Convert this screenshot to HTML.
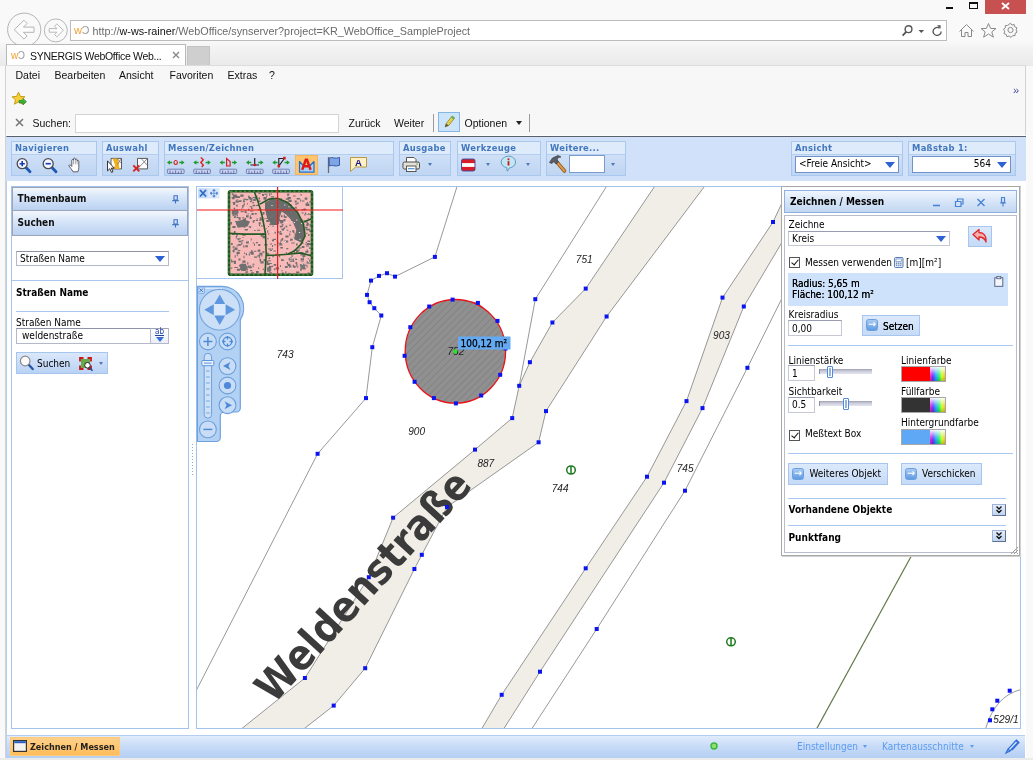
<!DOCTYPE html>
<html><head><meta charset="utf-8"><title>SYNERGIS WebOffice</title>
<style>
*{box-sizing:border-box;margin:0;padding:0}
html,body{width:1033px;height:760px;overflow:hidden;background:#f9f9f9}
body{position:relative;font-family:"DejaVu Sans Condensed","DejaVu Sans","Liberation Sans",sans-serif;font-size:10px;color:#000}
.abs{position:absolute}
.ui{position:absolute;font-family:"Liberation Sans",sans-serif;font-size:10.5px;color:#111;white-space:nowrap;line-height:12px}
.t{position:absolute;white-space:nowrap;line-height:12px}
svg{position:absolute;overflow:visible}
/* chrome */
#urlbar{left:70px;top:20px;width:877px;height:21px;background:#fff;border:1px solid #bcbcbc}
#tabshade{left:0;top:42px;width:1033px;height:24px;background:linear-gradient(#f8f8f8 0,#f2f2f2 30%,#eaeaea 100%)}
#tab{left:6px;top:44px;width:180px;height:22px;background:#fff;border:1px solid #b8b8b8;border-bottom:none}
#newtab{left:187px;top:46px;width:23px;height:19px;background:#cfcfcf;border:1px solid #c4c4c4;border-bottom:none}
#page{left:5px;top:65px;width:1021px;height:695px;background:#f7f7f7;border-left:1px solid #d2d2d2;border-right:1px solid #d2d2d2;border-top:1px solid #dcdcdc}
#findin{left:75px;top:114px;width:264px;height:19px;background:#fff;border:1px solid #d4d4d4}
/* app */
#app{left:6px;top:136px;width:1020px;height:622px;background:#fff;border-top:1px solid #59616b;border-left:1px solid #b7d0f0}
#tb{left:6px;top:137px;width:1020px;height:44px;background:#d0e1f9}
.grp{position:absolute;top:141px;height:35px;border:1px solid #a9c8ee;background:linear-gradient(#deebfb 0,#deebfb 12px,#cfe0f7 13px,#bfd5f2 100%)}
.grp:after{content:"";position:absolute;left:0;right:0;top:12px;height:1px;background:#b3cef0}
.grp b{position:absolute;left:3px;top:0px;font-family:"DejaVu Sans",sans-serif;font-size:8.400px;letter-spacing:.3px;font-weight:bold;color:#4377bd;line-height:12px;white-space:nowrap}
.sel{position:absolute;background:#fff;border:1px solid #7a9ccc;font-size:10px;line-height:14px;white-space:nowrap}
.arr{position:absolute;width:0;height:0;border-left:5px solid transparent;border-right:5px solid transparent;border-top:6px solid #2c62d4}
.sarr{position:absolute;width:0;height:0;border-left:2.5px solid transparent;border-right:2.5px solid transparent;border-top:3px solid #4f78b5}
.panel{position:absolute;background:#fff;border:1px solid #a3c3ec}
.hd{position:absolute;height:25px;background:linear-gradient(#f3f8fe 0,#dbe8f9 35%,#c9dcf5 70%,#b9d1f1 100%);border:1px solid #9ea3b8;font-weight:bold;font-size:10px;color:#111}
.hd span{position:absolute;left:4.500px;top:4px;line-height:13px;white-space:nowrap}
.cb{width:11px;height:11px;background:#fff;border:1px solid #555}
.cb:after{content:"";position:absolute;left:2.500px;top:0;width:3px;height:6px;border:solid #111;border-width:0 1.500px 1.500px 0;transform:rotate(40deg)}
.btn{background:linear-gradient(#dce9fb,#c6dbf7);border:1px solid #a6c5ef}
.ico{width:12px;height:12px;border-radius:2.500px;background:linear-gradient(#a9cbf3,#5f9be3);border:1px solid #6a9fde}
.ico:after{content:"→";position:absolute;left:1px;top:-2.500px;font-size:9.500px;line-height:12px;color:#fff;font-family:"DejaVu Sans",sans-serif;font-weight:bold}
.trk{width:53px;height:5px;background:linear-gradient(#9d9db5,#c9cad8 40%,#e4e5ee);border-left:1px solid #8e8fa8}
.thm{width:6px;height:12px;background:#e6f0fc;border:1px solid #4f8bd6;border-radius:1px;box-shadow:inset 0 0 0 1px #fff,inset 0 0 0 2px #8db6e8}
.sw{width:45px;height:16px;border:1px solid #a8a8a8}
.rb{width:15px;height:14px;background:linear-gradient(rgba(255,255,255,.95),rgba(255,255,255,.2) 50%,rgba(255,255,255,0) 70%,rgba(0,0,0,.2)),linear-gradient(90deg,#f2c,#63f,#2af,#2e7,#cf2,#fb2)}
.tgl{width:14px;height:12px;background:linear-gradient(#e4edfa,#c0d4f0);border:1px solid #9db4d8;border-right-color:#5f6f90;border-bottom-color:#5f6f90}
#root{position:absolute;left:0;top:0;width:1033px;height:760px;will-change:transform;overflow:hidden}
</style></head><body><div id="root">
<!-- ===== browser chrome ===== -->
<div id="tabshade" class="abs"></div>
<!-- window buttons -->
<div class="abs" style="left:985px;top:0;width:41px;height:14px;background:#c75050"></div>
<svg style="left:985px;top:0" width="41" height="14"><path d="M17 3l7 6M24 3l-7 6" stroke="#fff" stroke-width="1.8" fill="none"/></svg>
<div class="abs" style="left:969px;top:2px;width:9px;height:7px;border:1px solid #111;border-top-width:2px"></div>
<div class="abs" style="left:946px;top:7px;width:7px;height:2px;background:#111"></div>
<!-- back / forward -->
<svg style="left:0;top:0" width="80" height="50">
 <circle cx="24.200" cy="29.700" r="16.600" fill="#f9f9f9" stroke="#b2b2b2" stroke-width="1"/>
 <path d="M14.200 29.700L24 20.300l3.100 3.100-3.700 3.700H34v5.200H23.400l3.700 3.700L24 39.100z" fill="#fdfdfd" stroke="#b4b4b4" stroke-width="1" stroke-linejoin="round"/>
 <circle cx="55.800" cy="30.400" r="11.500" fill="#f9f9f9" stroke="#b6b6b6" stroke-width="1"/>
 <path d="M63.400 30.300L56.800 24l-2.200 2.200 2.400 2.400H49.200v3.600H57l-2.400 2.400 2.200 2.200z" fill="#fdfdfd" stroke="#b8b8b8" stroke-width="1" stroke-linejoin="round"/>
</svg>
<div id="urlbar" class="abs"></div>
<div class="ui" style="left:74px;top:24px;font-size:11px;color:#f0a030;letter-spacing:-0.5px">w<span style="color:#9a9a9a">Ɔ</span></div>
<div class="ui" id="urltxt" style="left:92.5px;top:25px;font-size:10.8px;color:#6a6a6a">http://<span style="color:#111">w-ws-rainer</span>/WebOffice/synserver?project=KR_WebOffice_SampleProject</div>
<!-- url bar icons -->
<svg style="left:900px;top:22px" width="50" height="18">
 <circle cx="8.5" cy="7.2" r="3.4" fill="none" stroke="#555" stroke-width="1.4"/><path d="M6.2 9.8L2.6 13.6" stroke="#555" stroke-width="1.8"/>
 <path d="M18.5 8l2.8 3 2.8-3z" fill="#555"/>
 <path d="M39.5 6.2a4 4 0 1 0 1.6 3.2" fill="none" stroke="#555" stroke-width="1.3"/><path d="M37 3.2h3.6v3.6z" fill="#555"/>
</svg>
<svg style="left:955px;top:20px" width="70" height="22" fill="none" stroke="#8a8a8a" stroke-width="1">
 <path d="M4.5 11.5l7-7 7 7M6.5 10v6.5h3.5v-4h3v4h3.5v-6.500"/>
 <path d="M33.500 3.500l2.200 5h5.300l-4.200 3.400 1.600 5.300-4.900-3.200-4.900 3.200 1.600-5.300-4.200-3.400h5.300z"/>
 <circle cx="55.500" cy="10" r="2.600"/><path d="M55.500 3.200l1.400 1.900 2.300-.6.500 2.300 2.200.9-.8 2.300 1 2.100-2 1.200-.1 2.400-2.400-.1-1.500 1.800-1.900-1.400-2.300.7-.7-2.300-2.200-.8.700-2.300-1.200-2 1.900-1.400-.1-2.400 2.400-.1z"/>
</svg>
<div id="tab" class="abs"></div>
<div id="newtab" class="abs"></div>
<div class="ui" style="left:11px;top:50px;font-size:10px;color:#f0a030;letter-spacing:-0.5px">w<span style="color:#9a9a9a">Ɔ</span></div>
<div class="ui" id="tabtxt" style="left:30px;top:50px;font-size:10.5px;letter-spacing:-0.3px">SYNERGIS WebOffice Web...</div>
<svg style="left:172px;top:51px" width="8" height="8"><path d="M1 1l6 6M7 1l-6 6" stroke="#8a8a8a" stroke-width="1.4"/></svg>
<div id="page" class="abs"></div>
<!-- menu -->
<div class="ui" style="left:15.500px;top:69px">Datei</div>
<div class="ui" style="left:54.500px;top:69px">Bearbeiten</div>
<div class="ui" style="left:119px;top:69px">Ansicht</div>
<div class="ui" style="left:169.500px;top:69px">Favoriten</div>
<div class="ui" style="left:227.500px;top:69px">Extras</div>
<div class="ui" style="left:269px;top:69px">?</div>
<!-- favourites star -->
<svg style="left:11px;top:91px" width="17" height="16">
 <path d="M7.500 1.200l1.900 4.200 4.500.4-3.400 3 1 4.400-4-2.400-4 2.400 1-4.400-3.400-3 4.500-.4z" fill="#f7d038" stroke="#c79a10" stroke-width="1" stroke-linejoin="round"/>
 <path d="M8 9.500h4v-2l3.500 3.200-3.500 3.200v-2h-4z" fill="#3bb33b" stroke="#1c7c1c" stroke-width=".6"/>
</svg>
<div class="ui" style="left:1013px;top:84px;color:#4a4a9a;font-size:11px">»</div>
<!-- find bar -->
<svg style="left:15px;top:118px" width="9" height="9"><path d="M1 1l7 7M8 1l-7 7" stroke="#777" stroke-width="1.500"/></svg>
<div class="ui" style="left:32.500px;top:117px">Suchen:</div>
<div id="findin" class="abs"></div>
<div class="ui" style="left:348.500px;top:117px">Zurück</div>
<div class="ui" style="left:394px;top:117px">Weiter</div>
<div class="abs" style="left:433px;top:114px;width:1px;height:18px;background:#9a9a9a"></div>
<div class="abs" style="left:438px;top:112px;width:22px;height:20px;background:#cce4f9;border:1px solid #84b6e6"></div>
<svg style="left:441px;top:114px" width="16" height="16"><path d="M4 13l1.200-3.500 6-7.500 2.500 2-6 7.500z" fill="#e6d24a" stroke="#8f8426" stroke-width=".8"/><path d="M4 13l1.200-3.500 2.500 2z" fill="#555"/><path d="M10 3.500l1.200-1.500 2.500 2-1.200 1.500z" fill="#5fae5f"/></svg>
<div class="ui" style="left:464.500px;top:117px">Optionen</div>
<div class="abs" style="left:516px;top:121px;width:0;height:0;border-left:3.500px solid transparent;border-right:3.500px solid transparent;border-top:4px solid #222"></div>
<div class="abs" style="left:529px;top:114px;width:1px;height:18px;background:#9a9a9a"></div>
<!-- ===== application ===== -->
<div class="abs" style="left:6px;top:135px;width:1020px;height:1px;background:#fdfdfd"></div>
<div id="app" class="abs"></div>
<div id="tb" class="abs"></div>
<div class="grp" style="left:11px;width:86px"><b>Navigieren</b></div>
<div class="grp" style="left:102px;width:57px"><b>Auswahl</b></div>
<div class="grp" style="left:164px;width:230px"><b>Messen/Zeichnen</b></div>
<div class="grp" style="left:399px;width:52px"><b>Ausgabe</b></div>
<div class="grp" style="left:457px;width:84px"><b>Werkzeuge</b></div>
<div class="grp" style="left:546px;width:80px"><b>Weitere...</b></div>
<div class="grp" style="left:791px;width:112px"><b>Ansicht</b></div>
<div class="grp" style="left:908px;width:108px"><b>Maßstab 1:</b></div>
<div class="sel" style="left:795px;top:156px;width:104px;height:17px;padding-left:3px;border:1.500px solid #6f93c9">&lt;Freie Ansicht&gt;</div>
<div class="arr" style="left:885px;top:162px"></div>
<div class="sel" style="left:912px;top:156px;width:99px;height:17px;text-align:right;padding-right:19px;border:1.500px solid #6f93c9">564</div>
<div class="arr" style="left:997px;top:162px"></div>
<div class="abs" style="left:295px;top:155px;width:23px;height:20px;background:#ffc56e;border:1px solid #f5b45c"></div>
<div class="abs" style="left:569px;top:155px;width:36px;height:18px;background:#fff;border:1px solid #7a9ccc"></div>
<div class="sarr" style="left:428px;top:163px"></div>
<div class="sarr" style="left:486px;top:163px"></div>
<div class="sarr" style="left:526px;top:163px"></div>
<div class="sarr" style="left:611px;top:163px"></div>

<svg style="left:0;top:0" width="640" height="182">
<g transform="translate(16,157.500)"><path d="M10 10l4 4.200" stroke="#1d58b4" stroke-width="2.800" stroke-linecap="round"/><circle cx="6.200" cy="6.200" r="5" fill="#f3f7ff" stroke="#4a4a52" stroke-width="1.300"/><path d="M3.600 6.200h5.200M6.200 3.600v5.200" stroke="#1838b8" stroke-width="1.600"/></g>
<g transform="translate(42,157.500)"><path d="M10 10l4 4.200" stroke="#1d58b4" stroke-width="2.800" stroke-linecap="round"/><circle cx="6.200" cy="6.200" r="5" fill="#f3f7ff" stroke="#4a4a52" stroke-width="1.300"/><path d="M3.600 6.200h5.200" stroke="#1838b8" stroke-width="1.600"/></g>
<g transform="translate(68,157.300)"><path d="M5 14.500C4 12 1.500 10 .8 8.200c.9-.9 2.200-.2 3 1V3c0-1.100 1.700-1.100 1.700 0V1.600c0-1.100 1.800-1.100 1.800 0v1c0-1.100 1.800-1.100 1.800 0V4c0-1.100 1.700-1.100 1.700 0v6.500c0 1.500-.5 2.500-.9 4z" fill="#fff" stroke="#50505a" stroke-width=".9" stroke-linejoin="round"/><path d="M5.500 3v4M7.300 2.600v4.400M9.100 4v3" stroke="#777" stroke-width=".6"/></g>
<g transform="translate(106,156.400)"><path d="M5 2h10.500v10.500H5z" fill="#fff" stroke="#5a5a5a" stroke-width="1"/><path d="M6.500 2h5.500l1.500 10.500h-5.500l1-4z" fill="#f2b01c"/><path d="M11 2l4.500 5M15.500 2l-4 6" stroke="#5a5a5a" stroke-width=".7" fill="none"/><path d="M1.500 4.500v10l2.300-2.200 1.700 3.700 1.500-.7-1.700-3.600h3z" fill="#fff" stroke="#222" stroke-width=".9" stroke-linejoin="round"/></g>
<g transform="translate(132,156.400)"><path d="M5.500 2h10v10.500h-10z" fill="#fff" stroke="#5a5a5a" stroke-width="1"/><path d="M5.500 12.500L15.500 2M9 2l6.500 7" stroke="#5a5a5a" stroke-width=".7"/><path d="M1.300 9l6 6M7.300 9l-6 6" stroke="#d42424" stroke-width="1.900"/></g>
<g transform="translate(167,155)"><path d="M0 7.500l3-2.200v1.400h2.200v1.600H3v1.400zM17.500 7.500l-3-2.200v1.400h-2.200v1.600h2.200v1.400z" fill="#1f9a2c"/><ellipse cx="8.700" cy="7.500" rx="1.700" ry="2" fill="none" stroke="#d61c1c" stroke-width="1.100"/><rect x=".4" y="14.200" width="16.700" height="4.300" rx=".8" fill="#c9d2ee" stroke="#5d6ea8" stroke-width=".8"/><path d="M3 15.500v3M5.800 16.500v2M8.600 15.500v3M11.400 16.500v2M14.200 15.500v3" stroke="#3c4a88" stroke-width=".7"/></g>
<g transform="translate(193.3,155)"><path d="M0 7.500l3-2.200v1.400h2.200v1.600H3v1.400zM17.500 7.500l-3-2.200v1.400h-2.200v1.600h2.200v1.400z" fill="#1f9a2c"/><path d="M7.500 2.500l2.500 2.300-2.500 2.700 2.500 2.500-1.500 2" fill="none" stroke="#d61c1c" stroke-width="1.300"/><rect x=".4" y="14.200" width="16.700" height="4.300" rx=".8" fill="#c9d2ee" stroke="#5d6ea8" stroke-width=".8"/><path d="M3 15.500v3M5.800 16.500v2M8.600 15.500v3M11.400 16.500v2M14.200 15.500v3" stroke="#3c4a88" stroke-width=".7"/></g>
<g transform="translate(219.6,155)"><path d="M0 7.500l3-2.200v1.400h2.200v1.600H3v1.400zM17.500 7.500l-3-2.200v1.400h-2.200v1.600h2.200v1.400z" fill="#1f9a2c"/><path d="M7 11V3.500l3.500 3V11z" fill="none" stroke="#d61c1c" stroke-width="1.200"/><rect x=".4" y="14.200" width="16.700" height="4.300" rx=".8" fill="#c9d2ee" stroke="#5d6ea8" stroke-width=".8"/><path d="M3 15.500v3M5.800 16.500v2M8.600 15.500v3M11.400 16.500v2M14.200 15.500v3" stroke="#3c4a88" stroke-width=".7"/></g>
<g transform="translate(246,155)"><path d="M0 7.500l3-2.200v1.400h2.200v1.600H3v1.400zM17.500 7.500l-3-2.200v1.400h-2.200v1.600h2.200v1.400z" fill="#1f9a2c"/><path d="M8.700 3v7M4.500 10h8.500" stroke="#222" stroke-width="1.200"/><circle cx="8.700" cy="10" r="1.300" fill="#d61c1c"/><rect x=".4" y="14.200" width="16.700" height="4.300" rx=".8" fill="#c9d2ee" stroke="#5d6ea8" stroke-width=".8"/><path d="M3 15.500v3M5.800 16.500v2M8.600 15.500v3M11.400 16.500v2M14.200 15.500v3" stroke="#3c4a88" stroke-width=".7"/></g>
<g transform="translate(272.3,155)"><path d="M0 7.500l3-2.200v1.400h2.200v1.600H3v1.400zM17.500 7.500l-3-2.200v1.400h-2.200v1.600h2.200v1.400z" fill="#1f9a2c"/><path d="M6.500 11V3.500h5.500zM6.500 11" fill="none" stroke="#222" stroke-width="1.100"/><rect x="10.800" y="1.800" width="2.600" height="2.600" fill="#d61c1c"/><rect x="5.200" y="9.800" width="2.600" height="2.600" fill="#d61c1c"/><rect x=".4" y="14.200" width="16.700" height="4.300" rx=".8" fill="#c9d2ee" stroke="#5d6ea8" stroke-width=".8"/><path d="M3 15.500v3M5.800 16.500v2M8.600 15.500v3M11.400 16.500v2M14.200 15.500v3" stroke="#3c4a88" stroke-width=".7"/></g>
<g transform="translate(295,155)"><path d="M4.500 6.500v10.700h14.500V6.500l-3.800 4h-6.900z" fill="#a9d0f5" stroke="#1e6fd0" stroke-width="1.200" stroke-linejoin="round"/><path d="M7.200 14.800L10.800 4.800h1.200L15.600 14.800M8.800 11.300h5.200" fill="none" stroke="#e01818" stroke-width="2.500"/></g>
<g transform="translate(326,155)"><path d="M2.500 2v16" stroke="#666a78" stroke-width="1.300"/><path d="M3.200 3.200c3-1.800 5.500 1.200 10.300-.7v7.800c-4.800 1.900-7.300-1.100-10.300.7z" fill="#7ea6e6" stroke="#2b4f9e" stroke-width=".9"/></g>
<g transform="translate(349,156)"><path d="M1.500 1.500h16v9.500H6.500l-5 4.500z" fill="#fff1c4" stroke="#b89a48" stroke-width="1"/><text x="6" y="10" font-family="Liberation Sans,sans-serif" font-weight="bold" font-size="9.500" fill="#151590">A</text></g>
<g transform="translate(402,156)"><path d="M4.500 6V1.500h7.500l2 2V6" fill="#fff" stroke="#555" stroke-width="1"/><rect x="1" y="6" width="16.500" height="7" rx="1.500" fill="#e4e2d6" stroke="#4a4a4a" stroke-width="1"/><rect x="4.500" y="10" width="9.500" height="5.500" fill="#fff" stroke="#555" stroke-width="1"/><path d="M6 12.700h6.500" stroke="#4a90d8" stroke-width="1.200"/><circle cx="15" cy="8" r=".7" fill="#3a3"/></g>
<g transform="translate(461,158.500)"><rect x=".5" y=".5" width="13.500" height="12" rx="1.800" fill="#d81e28" stroke="#3a4a9a" stroke-width=".9"/><rect x="1" y="4.600" width="12.500" height="3.800" fill="#fff"/></g>
<g transform="translate(500,155)"><path d="M8.500 1.200c4.200 0 7 2.600 7 5.800s-2.700 5.500-6 5.800l-2.200 3.400-.6-3.600C3.500 12 1.200 9.800 1.200 7s3.100-5.800 7.300-5.800z" fill="#c3e6f4" stroke="#5a9ab8" stroke-width="1"/><rect x="7.600" y="3.400" width="1.800" height="1.800" fill="#c81818"/><rect x="7.600" y="6.200" width="1.800" height="4.300" fill="#c81818"/></g>
<g transform="translate(548,154)"><path d="M7.500 6.500l9 10.500" stroke="#8a5a1c" stroke-width="3.600" stroke-linecap="round"/><path d="M7.500 6.500l9 10.500" stroke="#e0964a" stroke-width="2" stroke-linecap="round"/><path d="M1.500 8.500l3-4.500 5.500-2.500 3 1.500-3 .5-1 2.500 1.500 2-2.500 2-2-2.500-2 2z" fill="#5a5e66" stroke="#3a3c42" stroke-width=".7" stroke-linejoin="round"/></g>
</svg>
<div class="panel" style="left:11px;top:186px;width:178px;height:543px"></div>
<div class="hd" style="left:12px;top:187px;width:176px;height:24px"><span>Themenbaum</span></div>
<div class="hd" style="left:12px;top:210px;width:176px;height:26px"><span style="top:5px">Suchen</span></div>
<svg style="left:171px;top:194px" width="9" height="36" fill="none" stroke="#4072c4" stroke-width="1.100">
 <path d="M2.500 1.800h4.500M3 2v4h3.500M6.300 1.800v4.700M1 6.800h7M4.500 7v2.500" />
 <path d="M2.500 25.800h4.500M3 26v4h3.500M6.300 25.800v4.700M1 30.800h7M4.500 31v2.500"/>
</svg>
<div class="sel" style="left:16px;top:251px;width:153px;height:15px;border:1px solid #b5b8c8;border-top-color:#8f93a5;padding-left:3px;line-height:13px">Straßen Name</div>
<div class="arr" style="left:155px;top:256px"></div>
<div class="abs" style="left:12px;top:280px;width:176px;height:1px;background:#a9c6ec"></div>
<div class="t" style="left:16px;top:287px;font-weight:bold">Straßen Name</div>
<div class="abs" style="left:16px;top:311px;width:153px;height:1px;background:#a9c6ec"></div>
<div class="t" style="left:16px;top:317px">Straßen Name</div>
<div class="sel" style="left:16px;top:328px;width:135px;height:16px;border:1px solid #b5b8c8;border-top-color:#8f93a5;padding-left:5px;line-height:14px">weldenstraße</div>
<div class="abs" style="left:150px;top:328px;width:19px;height:16px;background:linear-gradient(#fff,#e9eef8);border:1px solid #b5b8c8;border-top-color:#a0a4b5"></div>
<div class="t" style="left:155px;top:327px;font-size:8px;color:#1d3fa0;line-height:10px;text-decoration:underline">ab</div>
<div class="abs" style="left:155.500px;top:337px;width:0;height:0;border-left:4px solid transparent;border-right:4px solid transparent;border-top:5px solid #3a6fd8"></div>
<div class="abs" style="left:16px;top:352px;width:92px;height:22px;background:linear-gradient(#dbe8fb,#b9d2f4);border:1px solid #a6c5ef"></div>
<svg style="left:19px;top:355px" width="16" height="16"><path d="M9.500 9.500l4.200 4.500" stroke="#2a56a8" stroke-width="2.400" stroke-linecap="round"/><circle cx="6.200" cy="6" r="4.800" fill="#fbfbfb" stroke="#8a8a8a" stroke-width="1.200"/></svg>
<div class="t" style="left:37px;top:358px">Suchen</div>
<svg style="left:79px;top:357px" width="15" height="15"><rect x="2" y="2" width="9" height="9" fill="#6aa84a"/><path d="M1 4.500V1h3.500M8.500 1H12v3.500M12 8.500V12H8.500M4.500 12H1V8.500" fill="none" stroke="#c81818" stroke-width="1.800"/><circle cx="8.500" cy="8.300" r="2.800" fill="#fff" stroke="#222" stroke-width="1"/><path d="M10.700 10.700l2.800 3" stroke="#1d4a9a" stroke-width="1.600"/></svg>
<div class="sarr" style="left:99px;top:362px"></div>
<!-- splitter dots -->
<div class="abs" style="left:192px;top:444px;width:1px;height:32px;background:repeating-linear-gradient(#9aa 0,#9aa 1px,transparent 1px,transparent 3px)"></div>

<div class="panel" style="left:196px;top:186px;width:825px;height:543px"></div>
<svg style="left:197px;top:187px;overflow:hidden" width="823" height="541" viewBox="197 187 823 541">
<defs><pattern id="hatch" width="5" height="5" patternUnits="userSpaceOnUse" patternTransform="rotate(-45)"><rect width="5" height="5" fill="#909090"/><path d="M0 2.500h5" stroke="#838383" stroke-width="1"/></pattern></defs>
<polygon points="654.9,186 585.7,288.6 552.4,322.5 529.9,362.2 519.2,385.8 512.2,418.1 475,449.6 393.1,517.7 368.8,577.2 304.9,678 240,730 302.5,730 333.7,705.6 365.2,668.2 414.4,569 421.8,554.8 447,507 538.6,442.3 546,411.1 606.6,316.5 704.8,186" fill="#f1eee8"/>
<polygon points="790,186 773,222 722.5,297.6 686.5,401.1 647,476.7 585.7,568.3 501.7,694.8 481,730 503,730 540,671.7 664,482.7 702.5,408.1 743.8,306.5 800,212" fill="#f1eee8"/>
<polyline points="654.9,186 585.7,288.6 552.4,322.5 529.9,362.2 519.2,385.8 512.2,418.1 475,449.6 393.1,517.7 368.8,577.2 304.9,678 240,730" stroke="#7d7d7d" stroke-width=".8" fill="none"/>
<polyline points="704.8,186 606.6,316.5 546,411.1 538.6,442.3 447,507 421.8,554.8 414.4,569 365.2,668.2 333.7,705.6 302.5,730" stroke="#7d7d7d" stroke-width=".8" fill="none"/>
<polyline points="790,186 773,222 722.5,297.6 686.5,401.1 647,476.7 585.7,568.3 501.7,694.8 481,730" stroke="#7d7d7d" stroke-width=".8" fill="none"/>
<polyline points="800,212 743.8,306.5 702.5,408.1 664,482.7 540,671.7 503,730" stroke="#7d7d7d" stroke-width=".8" fill="none"/>
<polyline points="800,262 747.4,367.8 685,490.7 596.7,629 531,730" stroke="#7d7d7d" stroke-width=".8" fill="none"/>
<polyline points="457.2,186 434.9,256.9 395,276.6 387,273.2 379,275.9 371,280.6 367,294.9 369.6,302.2 374.3,308.2 381.3,315.5 372.3,347.2 366,398.1 317.6,453.8 196,691" stroke="#7d7d7d" stroke-width=".8" fill="none"/>
<polyline points="606.8,186 535.3,299.2 519.2,385.8" stroke="#7d7d7d" stroke-width=".8" fill="none"/>
<polygon points="429.2,306.5 452.6,299.6 477.9,302.9 497.5,320.9 505.5,348.5 500.2,374.8 481.2,395.5 455.9,403.4 433.9,398.1 414.6,381.8 404.6,355.8 410.3,327.2" stroke="#7d7d7d" stroke-width=".8" fill="none"/>
<path d="M1021 689.500Q995 696 985.500 729" stroke="#7d7d7d" stroke-width=".8" fill="none"/>
<path d="M911.300 556L816.700 728.700" stroke="#5f7748" stroke-width="1.200" fill="none"/>
<ellipse cx="455.400" cy="351.300" rx="50.200" ry="51.800" fill="url(#hatch)" stroke="#e8141c" stroke-width="1.300"/>
<text x="575.8" y="263.3" font-family="Liberation Sans,sans-serif" font-style="italic" font-size="10.100" fill="#222">751</text>
<text x="276.7" y="358" font-family="Liberation Sans,sans-serif" font-style="italic" font-size="10.100" fill="#222">743</text>
<text x="447.5" y="355" font-family="Liberation Sans,sans-serif" font-style="italic" font-size="10.100" fill="#222">752</text>
<text x="408.2" y="435.2" font-family="Liberation Sans,sans-serif" font-style="italic" font-size="10.100" fill="#222">900</text>
<text x="477.4" y="466.6" font-family="Liberation Sans,sans-serif" font-style="italic" font-size="10.100" fill="#222">887</text>
<text x="551.7" y="491.7" font-family="Liberation Sans,sans-serif" font-style="italic" font-size="10.100" fill="#222">744</text>
<text x="676.7" y="472.3" font-family="Liberation Sans,sans-serif" font-style="italic" font-size="10.100" fill="#222">745</text>
<text x="713.1" y="338.5" font-family="Liberation Sans,sans-serif" font-style="italic" font-size="10.100" fill="#222">903</text>
<text x="993.3" y="722.7" font-family="Liberation Sans,sans-serif" font-style="italic" font-size="10.100" fill="#222">529/1</text>
<g transform="translate(571,470)" fill="none" stroke="#1d7a1d" stroke-width="1.500"><ellipse cx="0" cy="0" rx="4.300" ry="4"/><path d="M0 -4v8"/></g>
<g transform="translate(731,641.8)" fill="none" stroke="#1d7a1d" stroke-width="1.500"><ellipse cx="0" cy="0" rx="4.300" ry="4"/><path d="M0 -4v8"/></g>
<text transform="translate(273.800,704.700) rotate(-47.500)" font-family="DejaVu Sans Condensed,DejaVu Sans,sans-serif" font-weight="bold" font-size="42" fill="#3b3b3b">Weldenstraße</text>
<rect x="432.9" y="254.9" width="4" height="4" fill="#0a14f0"/>
<rect x="393" y="274.6" width="4" height="4" fill="#0a14f0"/>
<rect x="385" y="271.2" width="4" height="4" fill="#0a14f0"/>
<rect x="377" y="273.9" width="4" height="4" fill="#0a14f0"/>
<rect x="369" y="278.6" width="4" height="4" fill="#0a14f0"/>
<rect x="365" y="292.9" width="4" height="4" fill="#0a14f0"/>
<rect x="367.6" y="300.2" width="4" height="4" fill="#0a14f0"/>
<rect x="372.3" y="306.2" width="4" height="4" fill="#0a14f0"/>
<rect x="379.3" y="313.5" width="4" height="4" fill="#0a14f0"/>
<rect x="370.3" y="345.2" width="4" height="4" fill="#0a14f0"/>
<rect x="364" y="396.1" width="4" height="4" fill="#0a14f0"/>
<rect x="315.6" y="451.8" width="4" height="4" fill="#0a14f0"/>
<rect x="533.3" y="297.2" width="4" height="4" fill="#0a14f0"/>
<rect x="583.7" y="286.6" width="4" height="4" fill="#0a14f0"/>
<rect x="550.4" y="320.5" width="4" height="4" fill="#0a14f0"/>
<rect x="527.9" y="360.2" width="4" height="4" fill="#0a14f0"/>
<rect x="517.2" y="383.8" width="4" height="4" fill="#0a14f0"/>
<rect x="510.2" y="416.1" width="4" height="4" fill="#0a14f0"/>
<rect x="473" y="447.6" width="4" height="4" fill="#0a14f0"/>
<rect x="391.1" y="515.7" width="4" height="4" fill="#0a14f0"/>
<rect x="366.8" y="575.2" width="4" height="4" fill="#0a14f0"/>
<rect x="302.9" y="676" width="4" height="4" fill="#0a14f0"/>
<rect x="604.6" y="314.5" width="4" height="4" fill="#0a14f0"/>
<rect x="544" y="409.1" width="4" height="4" fill="#0a14f0"/>
<rect x="536.6" y="440.3" width="4" height="4" fill="#0a14f0"/>
<rect x="445" y="505" width="4" height="4" fill="#0a14f0"/>
<rect x="419.8" y="552.8" width="4" height="4" fill="#0a14f0"/>
<rect x="412.4" y="567" width="4" height="4" fill="#0a14f0"/>
<rect x="363.2" y="666.2" width="4" height="4" fill="#0a14f0"/>
<rect x="331.7" y="703.6" width="4" height="4" fill="#0a14f0"/>
<rect x="771" y="220" width="4" height="4" fill="#0a14f0"/>
<rect x="720.5" y="295.6" width="4" height="4" fill="#0a14f0"/>
<rect x="684.5" y="399.1" width="4" height="4" fill="#0a14f0"/>
<rect x="645" y="474.7" width="4" height="4" fill="#0a14f0"/>
<rect x="583.7" y="566.3" width="4" height="4" fill="#0a14f0"/>
<rect x="499.7" y="692.8" width="4" height="4" fill="#0a14f0"/>
<rect x="741.8" y="304.5" width="4" height="4" fill="#0a14f0"/>
<rect x="700.5" y="406.1" width="4" height="4" fill="#0a14f0"/>
<rect x="662" y="480.7" width="4" height="4" fill="#0a14f0"/>
<rect x="538" y="669.7" width="4" height="4" fill="#0a14f0"/>
<rect x="745.4" y="365.8" width="4" height="4" fill="#0a14f0"/>
<rect x="683" y="488.7" width="4" height="4" fill="#0a14f0"/>
<rect x="594.7" y="627" width="4" height="4" fill="#0a14f0"/>
<rect x="427.2" y="304.5" width="4" height="4" fill="#0a14f0"/>
<rect x="450.6" y="297.6" width="4" height="4" fill="#0a14f0"/>
<rect x="475.9" y="300.9" width="4" height="4" fill="#0a14f0"/>
<rect x="495.5" y="318.9" width="4" height="4" fill="#0a14f0"/>
<rect x="503.5" y="346.5" width="4" height="4" fill="#0a14f0"/>
<rect x="498.2" y="372.8" width="4" height="4" fill="#0a14f0"/>
<rect x="479.2" y="393.5" width="4" height="4" fill="#0a14f0"/>
<rect x="453.9" y="401.4" width="4" height="4" fill="#0a14f0"/>
<rect x="431.9" y="396.1" width="4" height="4" fill="#0a14f0"/>
<rect x="412.6" y="379.8" width="4" height="4" fill="#0a14f0"/>
<rect x="402.6" y="353.8" width="4" height="4" fill="#0a14f0"/>
<rect x="408.3" y="325.2" width="4" height="4" fill="#0a14f0"/>
<rect x="1007.7" y="688.7" width="4" height="4" fill="#0a14f0"/>
<rect x="995.3" y="698.7" width="4" height="4" fill="#0a14f0"/>
<rect x="990.3" y="707.3" width="4" height="4" fill="#0a14f0"/>
<rect x="988" y="718.3" width="4" height="4" fill="#0a14f0"/>
<circle cx="455.200" cy="351.500" r="2.200" fill="#2ee02e"/>
<rect x="458" y="336.500" width="52.500" height="13" fill="#64aaf3"/>
<text x="460.500" y="346.800" font-family="DejaVu Sans Condensed,DejaVu Sans,sans-serif" font-size="10" fill="#000" stroke="#000" stroke-width=".25">100,12 m²</text>
</svg>
<div class="abs" style="left:197px;top:187px;width:146px;height:92px;background:#fff;border:1px solid #a9c6ee;border-top:none;border-left:none"></div>
<svg style="left:197px;top:187px" width="146" height="92" viewBox="197 187 146 92">
<rect x="229" y="191.200" width="83" height="83.600" rx="1.500" fill="#f8b9b9"/>
<path d="M265 202.4 L272.6 199 L280.9 199.4 L290.1 204.1 L298.5 213.2 L303.6 224.9 L305 235.8 L301 242.5 L294.3 239.2 L296.3 230 L292.6 221.6 L286.8 214.9 L281.7 211.6 L279.6 217.4 L277.6 224.9 L271.7 224.9 L267.2 218.3 L265 209.1Z" fill="#6b6b6b"/>
<path d="M234.9 221.6 L244.1 219.4 L250 221.6 L247.5 226.6 L237.8 227.8Z" fill="#707070"/>
<path d="M238.8 265.1 L245.8 263.4 L247.8 269.2 L241.6 271.2Z" fill="#707070"/>
<path d="M231.6 211.6 L237.8 209.1 L238.3 214.1 L232.8 216.6Z" fill="#7a7a7a"/>
<path d="M299.6 264.2 L304.3 263.4 L305.6 268.4 L301 269.6Z" fill="#777"/>
<path d="M266.9 267.6 L271.2 266.7 L271.2 271.2 L266.9 271.7Z" fill="#777"/>
<path d="M255.9 205.1h3.2v1h-3.2zM235.8 235.9h1.6v2.4h-1.6zM234.6 233.6h1v1h-1zM264.7 198.6h1v2.4h-1zM264.0 259.1h1v1.2h-1zM280.5 239.6h1v2.4h-1zM276.8 197.0h1.2v1h-1.2zM274.5 203.7h2v1.2h-2zM273.3 238.7h2.6v1.2h-2.6zM238.2 238.7h1.2v1.6h-1.2zM237.8 250.0h2.6v1h-2.6zM279.5 232.7h2.6v2h-2.6zM292.2 230.2h2v1.6h-2zM254.0 256.6h3.2v1.2h-3.2zM236.5 217.0h2v1.6h-2zM288.4 216.0h1v1h-1zM271.0 206.2h1.6v1.2h-1.6zM304.7 226.7h3.2v1h-3.2zM291.2 238.8h1.6v1.6h-1.6zM285.6 240.5h2.6v2h-2.6zM235.5 200.5h1.6v2h-1.6zM285.8 198.2h3.2v1.6h-3.2zM281.8 272.4h2v1.6h-2zM287.3 264.0h1.6v1h-1.6zM305.3 221.4h2.6v1h-2.6zM269.5 210.5h1.6v1.2h-1.6zM289.1 224.8h2v1h-2zM243.3 225.1h1.6v1.2h-1.6zM295.5 262.1h1.6v2h-1.6zM308.9 247.6h2v1.2h-2zM242.1 207.1h1.2v1.2h-1.2zM231.0 259.5h1.2v1.6h-1.2zM252.6 204.7h2.6v1.6h-2.6zM278.8 218.5h1.2v2.4h-1.2zM306.0 245.4h3.2v1h-3.2zM266.5 262.7h3.2v2.4h-3.2zM261.4 224.9h1v2h-1zM280.7 198.0h1v1.2h-1zM265.3 201.8h2.6v1h-2.6zM238.2 238.3h2.6v1h-2.6zM305.9 242.1h1v1.2h-1zM279.1 204.9h1.6v1.6h-1.6zM278.2 230.9h1v2h-1zM309.4 230.3h2v1.6h-2zM236.9 201.2h1.6v1.6h-1.6zM268.3 248.4h2.6v1h-2.6zM246.4 269.2h1.6v1.2h-1.6zM285.2 266.1h2.6v1.6h-2.6zM308.3 262.1h3.2v1.6h-3.2zM271.5 265.7h1.6v1.2h-1.6zM272.6 255.3h1.6v1.2h-1.6zM279.1 256.1h1.2v1.2h-1.2zM295.5 252.2h1.2v1.2h-1.2zM271.4 221.4h1v1h-1zM293.2 230.8h1.2v2.4h-1.2zM306.5 228.8h3.2v1.6h-3.2zM306.4 222.2h1.2v1h-1.2zM248.1 208.7h1.2v2h-1.2zM279.9 265.0h1v2h-1zM302.7 220.5h3.2v1h-3.2zM296.8 202.6h2v1.2h-2zM268.2 207.3h3.2v1.6h-3.2zM236.9 268.7h3.2v2h-3.2zM267.1 252.5h1v1.2h-1zM243.6 203.2h1.2v2.4h-1.2zM302.4 257.5h1.2v2.4h-1.2zM296.1 271.4h3.2v1.6h-3.2zM242.5 236.9h1v1h-1zM293.9 251.1h1v2.4h-1zM290.0 204.1h1.2v1.2h-1.2zM232.2 210.0h2.6v1.2h-2.6zM291.1 219.1h2.6v2h-2.6zM296.7 197.9h3.2v1.6h-3.2zM301.8 246.0h2.6v2h-2.6zM296.2 263.3h1.2v2.4h-1.2zM242.1 233.8h2v1.2h-2zM278.7 255.1h1.2v1.2h-1.2zM241.3 242.5h1v2.4h-1zM234.9 247.6h2.6v2.4h-2.6zM268.6 255.1h2.6v1h-2.6zM249.9 215.2h1v2.4h-1zM266.2 195.2h1v2h-1zM256.0 270.9h2.6v2.4h-2.6zM246.0 215.2h2.6v2.4h-2.6zM294.6 233.6h1.2v2.4h-1.2zM300.1 268.4h1.6v2.4h-1.6zM301.4 209.2h2v1.2h-2zM263.3 224.4h1.6v1h-1.6zM283.7 227.3h1.2v1.6h-1.2zM292.7 264.8h1.2v1.6h-1.2zM241.4 263.6h2v1.2h-2zM289.7 200.5h2v1.2h-2zM309.2 259.6h1.2v2h-1.2zM309.5 225.3h2v1.2h-2zM258.5 200.4h1.6v1h-1.6zM257.0 229.7h3.2v1h-3.2zM260.7 234.4h1.6v2.4h-1.6zM306.9 202.0h1.2v1h-1.2zM236.7 214.8h1.2v1.6h-1.2zM290.5 258.6h3.2v1.6h-3.2zM262.5 235.9h2.6v2.4h-2.6zM269.6 219.2h1.6v1h-1.6zM294.0 207.7h1v1.6h-1zM305.1 243.8h1.6v1h-1.6zM278.7 210.8h1.6v1h-1.6zM266.3 220.1h2.6v2h-2.6zM304.1 214.4h1.2v1h-1.2zM272.2 212.1h1v1.2h-1zM251.0 207.5h1.6v1.6h-1.6zM272.5 209.5h2v2.4h-2zM283.8 214.6h1v1.6h-1zM233.0 194.5h2.6v2.4h-2.6zM308.2 234.1h1.2v2h-1.2zM238.5 258.5h2v2h-2zM273.7 264.1h2.6v1.6h-2.6zM285.0 271.6h1.6v1.2h-1.6zM296.6 249.5h3.2v1.2h-3.2zM262.4 220.8h1v1.2h-1zM231.1 243.0h1.6v2h-1.6zM243.1 199.8h2v2.4h-2zM283.6 215.6h1.2v1.6h-1.2zM233.6 207.8h1.6v2h-1.6zM230.3 222.1h1.6v2.4h-1.6zM255.9 195.8h1.6v1.2h-1.6zM258.5 193.1h2v1h-2zM268.0 233.2h1.2v1.2h-1.2zM270.4 193.4h1.6v1h-1.6zM241.5 239.9h2v1h-2zM254.0 243.4h1v2.4h-1zM306.6 261.3h1.2v2.4h-1.2zM261.2 219.1h2v1.2h-2zM252.7 242.5h1.2v1h-1.2zM296.0 250.2h2.6v2h-2.6zM288.7 258.0h1.2v2.4h-1.2zM290.2 238.5h1v2.4h-1zM293.8 249.9h3.2v1.2h-3.2zM236.8 196.3h3.2v1.6h-3.2zM306.8 223.1h2v2.4h-2zM234.1 194.5h2.6v1.2h-2.6zM269.1 193.3h1v2.4h-1zM301.8 200.4h2.6v1h-2.6zM289.7 230.9h1v1.6h-1zM248.8 253.5h1.2v2h-1.2zM269.5 223.6h2v1.6h-2zM291.4 242.4h3.2v1.2h-3.2zM236.2 204.8h1.6v1.6h-1.6zM279.7 203.7h2v1h-2zM268.9 270.8h1v1.2h-1zM284.1 216.3h2.6v1.6h-2.6zM267.2 230.3h1v2.4h-1zM245.9 271.3h2v1h-2zM253.2 199.1h2.6v2h-2.6zM309.5 223.9h1.2v1h-1.2zM276.5 204.3h2.6v1.6h-2.6zM306.2 203.6h3.2v2.4h-3.2zM252.4 202.0h1.6v1.2h-1.6zM269.8 263.1h2v1h-2zM242.7 269.0h3.2v2h-3.2zM262.4 251.2h2v1.6h-2zM260.1 202.7h1.6v1h-1.6zM256.0 220.1h2v1h-2zM305.2 208.7h1v1.6h-1zM250.3 198.2h2v2.4h-2zM236.1 267.0h1.6v1h-1.6zM252.5 197.1h3.2v1.6h-3.2zM280.8 204.9h1.6v2h-1.6zM270.9 208.2h1.6v2h-1.6zM300.7 258.0h3.2v2h-3.2zM303.1 268.3h2.6v1.2h-2.6zM287.6 197.0h3.2v2h-3.2zM266.1 253.2h3.2v1.6h-3.2zM268.8 266.0h2.6v1.2h-2.6zM243.7 226.2h1.6v1.6h-1.6zM250.5 252.1h3.2v1.6h-3.2zM262.5 212.1h2v2.4h-2zM283.5 202.6h3.2v1.2h-3.2zM236.0 233.0h2v2.4h-2zM247.6 265.5h2v2h-2zM241.2 208.4h1v1.2h-1zM257.4 200.3h1.2v1.6h-1.2zM250.7 238.6h1v2h-1zM260.6 252.7h1.2v2h-1.2zM251.6 253.2h2v1.6h-2zM275.9 221.8h3.2v2.4h-3.2zM272.3 256.2h1.2v1h-1.2zM251.7 212.9h2v2h-2zM264.5 218.0h1v1.2h-1zM232.6 249.8h2v2.4h-2zM269.2 198.9h2.6v2h-2.6zM307.8 212.9h1v1.2h-1zM242.4 234.8h3.2v1h-3.2zM305.3 250.7h3.2v2h-3.2zM236.8 255.1h1v1.2h-1zM248.6 266.6h3.2v1.6h-3.2zM307.0 243.1h2.6v2h-2.6zM285.9 202.0h1v1.6h-1zM272.0 239.6h2v1.6h-2zM247.9 241.1h1v2.4h-1zM254.1 229.9h1.6v1.2h-1.6zM268.0 211.8h1.2v1h-1.2zM306.8 249.4h1.6v1h-1.6zM231.7 232.9h3.2v2h-3.2zM236.5 211.2h2v1.6h-2zM248.1 195.7h1.6v2h-1.6zM259.0 224.7h1v1.6h-1zM289.1 233.4h1.2v2h-1.2zM307.6 217.9h1.2v1.2h-1.2zM267.2 214.2h1.6v1h-1.6zM306.2 232.7h1.2v1.2h-1.2zM268.8 265.8h1v2.4h-1zM241.7 224.5h1.2v1h-1.2zM307.9 204.4h1v1h-1zM244.7 229.0h3.2v1.6h-3.2zM288.6 272.8h1.2v1.6h-1.2zM245.3 245.2h2.6v2h-2.6zM232.6 246.2h2v1.6h-2zM308.8 228.4h1v1h-1zM236.3 199.5h2v1h-2zM274.9 253.7h2v1.6h-2zM291.5 217.7h2v1h-2zM233.9 230.9h1.6v2.4h-1.6zM303.6 208.4h1.6v2h-1.6zM232.4 225.9h3.2v2h-3.2zM233.3 195.8h1v1h-1zM250.6 252.8h2.6v1.6h-2.6zM259.0 219.8h2.6v1h-2.6zM251.0 250.3h1.6v1.6h-1.6zM253.8 250.7h2.6v1h-2.6zM231.9 211.7h2v2h-2zM306.3 223.9h1.6v2h-1.6zM295.2 203.6h2v1.2h-2zM230.7 267.5h1.6v1.2h-1.6zM278.6 219.2h1.6v2h-1.6zM258.9 255.6h1v2.4h-1zM245.8 253.2h1.2v2h-1.2zM235.2 195.7h2.6v2.4h-2.6zM256.1 271.4h1v1h-1zM251.2 199.7h1v2h-1zM269.9 249.8h2v1.2h-2zM248.7 226.3h2.6v1.2h-2.6zM289.8 260.8h3.2v1h-3.2zM292.4 216.5h1.6v2.4h-1.6zM251.4 213.3h1.6v1.2h-1.6zM265.2 207.9h1.2v1.2h-1.2zM252.5 265.6h1.2v1.6h-1.2zM235.2 213.1h1.2v2.4h-1.2zM272.1 245.0h1v2h-1zM309.3 201.2h2v1.2h-2zM297.2 266.2h1v1.6h-1zM248.6 197.0h2.6v2.4h-2.6zM245.5 199.0h2.6v1.2h-2.6zM265.9 213.8h3.2v1h-3.2zM238.5 240.7h2.6v1.6h-2.6zM247.4 222.5h1.2v1h-1.2zM246.3 213.4h2.6v1.2h-2.6zM295.2 258.5h2v1.6h-2zM244.8 218.0h1.2v1h-1.2zM293.6 236.8h1v2h-1zM238.1 224.6h2.6v1.2h-2.6zM281.1 200.3h1.2v2h-1.2zM285.6 225.8h1.6v1.6h-1.6zM263.4 197.1h3.2v2.4h-3.2zM300.7 226.1h1v1.6h-1zM281.6 224.3h2v1.2h-2zM305.4 227.7h1.2v2h-1.2zM239.1 200.2h2.6v1.6h-2.6zM266.9 206.0h1v1h-1zM274.1 244.3h2v1h-2zM275.8 267.2h3.2v2.4h-3.2zM243.7 220.8h1.2v2.4h-1.2zM243.7 198.4h2v2h-2zM290.3 256.4h1.2v1.6h-1.2zM240.1 268.4h2v1.6h-2zM234.3 267.1h2v1h-2zM302.3 242.6h1.2v1.2h-1.2zM279.7 242.2h1.2v2h-1.2zM244.6 210.5h2v2.4h-2zM242.5 221.7h1.2v1.2h-1.2zM307.7 258.3h1.2v1h-1.2zM300.7 260.4h3.2v1h-3.2zM283.4 218.9h2v2.4h-2zM266.5 260.9h1.6v2h-1.6zM254.7 212.9h2v1.6h-2zM265.7 228.1h1v1h-1zM279.5 232.2h1.2v2h-1.2zM291.1 255.4h2v1.2h-2zM294.8 225.0h1v1.2h-1zM258.7 222.2h2v2.4h-2zM270.8 196.3h3.2v1.2h-3.2zM236.6 251.7h3.2v2.4h-3.2zM236.4 253.2h2v1.2h-2zM232.1 198.3h2.6v1h-2.6zM245.5 271.5h2v1.6h-2zM306.5 266.3h1.2v1.2h-1.2zM235.2 221.1h1.6v1.2h-1.6zM255.9 242.1h2v1.2h-2zM250.3 270.1h2v1.2h-2zM277.4 242.3h1.2v1.6h-1.2zM259.8 208.9h2v1.2h-2zM280.9 215.3h1.6v2h-1.6zM243.5 255.8h1v2.4h-1zM233.9 261.7h2v2.4h-2zM271.7 248.1h1v1.6h-1zM309.4 243.4h2v1.6h-2zM251.2 272.2h2.6v1.2h-2.6zM258.8 254.2h2v1.2h-2zM244.1 252.5h1v1.6h-1zM295.6 213.3h3.2v2.4h-3.2zM304.3 264.7h3.2v1h-3.2zM289.8 210.7h1.6v2.4h-1.6zM280.0 226.4h1.6v1h-1.6zM240.6 211.2h3.2v1h-3.2zM231.8 193.2h1.6v1.6h-1.6zM238.5 221.6h1.2v2h-1.2zM276.7 240.1h1.2v1.6h-1.2zM279.9 231.0h1.2v1h-1.2zM304.9 212.5h1.2v2h-1.2zM237.7 244.1h3.2v1.6h-3.2zM262.2 214.1h1v1h-1zM281.6 238.0h1.6v2.4h-1.6zM281.6 228.5h2.6v2h-2.6zM249.9 265.3h1v1h-1zM272.5 225.5h1.2v1.2h-1.2zM234.7 255.3h1v2.4h-1zM274.1 268.3h1.2v2h-1.2zM246.0 241.6h2.6v2h-2.6zM295.1 207.0h1.6v1h-1.6zM254.0 196.9h3.2v2h-3.2zM287.2 193.5h2v2h-2zM236.4 245.4h1.2v1.2h-1.2zM309.7 213.9h3.2v1h-3.2zM239.9 264.3h3.2v1.6h-3.2zM286.9 214.3h2.6v2h-2.6zM284.9 266.4h1.6v1.6h-1.6zM281.4 270.2h1.2v1h-1.2zM300.4 194.2h1.6v1.2h-1.6zM297.3 209.2h1.2v1.6h-1.2zM245.4 224.1h2.6v1.2h-2.6zM260.4 261.2h3.2v2.4h-3.2zM267.6 260.2h3.2v1h-3.2zM298.6 228.0h3.2v1.2h-3.2zM275.6 217.6h1.2v2h-1.2zM279.8 199.2h1.2v1.2h-1.2zM232.6 202.0h2.6v1.2h-2.6zM257.6 204.3h1v1h-1zM233.3 248.4h3.2v1h-3.2zM285.8 251.9h1v2.4h-1zM290.9 208.9h2.6v1h-2.6zM300.4 253.5h3.2v2h-3.2zM238.6 209.5h1v1h-1zM232.8 260.8h3.2v1h-3.2zM296.0 243.5h1.6v2h-1.6zM238.0 200.8h3.2v1.2h-3.2zM253.6 219.9h1.6v1h-1.6zM258.1 267.4h1v1.6h-1zM302.8 254.5h2.6v2.4h-2.6zM268.1 216.0h3.2v1h-3.2zM293.1 195.5h2.6v1h-2.6zM257.7 249.4h2.6v2.4h-2.6zM247.3 262.0h1v2.4h-1zM295.6 206.6h1v2.4h-1zM246.2 254.0h1v1h-1zM257.8 200.7h3.2v1.2h-3.2zM307.4 240.4h2.6v1.6h-2.6zM276.2 205.7h1.2v1.2h-1.2zM269.9 201.8h3.2v1h-3.2zM269.2 272.3h2.6v1h-2.6zM280.2 221.4h2v2h-2zM301.3 252.6h2v1h-2zM259.8 217.3h2v2.4h-2zM270.1 223.3h3.2v1.2h-3.2zM305.5 203.2h2.6v2.4h-2.6zM281.7 220.9h1.6v2.4h-1.6zM242.4 260.4h3.2v2.4h-3.2zM289.4 206.6h2v1.6h-2zM276.3 203.1h2v1.2h-2zM270.6 214.4h3.2v2.4h-3.2zM242.4 205.5h1.2v1.6h-1.2zM278.2 220.9h1.2v1.6h-1.2zM306.5 213.7h3.2v1h-3.2zM243.2 245.6h1.2v2h-1.2zM242.1 204.9h1.6v1.6h-1.6zM264.8 208.7h3.2v1h-3.2zM252.5 263.8h2v1h-2zM231.0 261.3h2v1.2h-2zM270.0 243.6h2v1h-2zM241.3 241.3h2v1h-2zM289.3 265.6h2v2.4h-2zM277.0 244.8h1.2v2.4h-1.2zM298.2 247.4h3.2v1h-3.2zM266.3 218.0h3.2v1h-3.2zM301.6 212.4h2v1.2h-2zM250.0 226.9h2v1h-2zM279.7 225.7h3.2v1.2h-3.2zM301.6 219.2h1v2h-1zM296.5 265.7h1v1h-1zM250.1 210.4h3.2v1.2h-3.2zM271.5 201.1h2.6v2h-2.6zM273.3 250.4h2.6v1h-2.6zM281.1 259.3h2.6v1.6h-2.6zM262.8 268.8h1.2v1.2h-1.2zM261.4 254.0h1v2.4h-1zM258.4 197.5h1.6v2h-1.6zM262.0 194.1h2v2h-2zM280.3 247.0h2.6v1.6h-2.6zM238.7 217.3h2v2.4h-2zM307.7 272.5h2v2h-2zM247.0 203.3h1v1.2h-1zM267.5 238.0h1.2v1.2h-1.2zM258.3 244.1h2v2h-2zM309.7 253.8h3.2v1.2h-3.2zM292.4 230.6h1.2v1.6h-1.2zM286.3 248.0h2v1.2h-2zM268.5 257.4h1.6v1.6h-1.6zM249.6 217.1h2v2h-2zM264.3 244.0h3.2v1.6h-3.2zM242.2 217.3h2v1h-2zM236.8 238.2h1.6v1.2h-1.6zM272.5 220.6h2.6v1h-2.6zM282.6 209.8h1v1.6h-1zM250.0 201.1h1.2v1.2h-1.2zM244.9 229.2h1.2v1.2h-1.2zM302.3 256.3h1.2v2.4h-1.2zM301.3 241.7h1v2.4h-1zM293.0 260.1h1.2v2h-1.2zM285.4 235.5h3.2v2h-3.2zM283.7 202.4h1v1.6h-1zM263.5 259.2h2v2h-2zM274.6 231.7h1.2v2h-1.2zM249.7 206.2h2.6v1h-2.6zM242.8 218.7h3.2v2.4h-3.2zM269.8 216.7h2v1.6h-2zM264.1 273.0h3.2v1h-3.2zM244.4 221.8h3.2v1h-3.2zM231.6 196.7h3.2v1.6h-3.2zM294.7 200.5h2v2h-2zM290.6 204.6h1.2v2h-1.2zM280.0 220.1h3.2v1.6h-3.2zM257.3 255.3h2.6v1.2h-2.6zM252.7 220.4h1.6v2.4h-1.6zM234.2 216.1h1.6v2h-1.6zM262.3 233.3h1.6v2.4h-1.6zM257.6 209.3h2v1h-2zM256.5 218.4h1.6v1.2h-1.6zM276.9 243.8h1v2h-1zM287.8 263.8h2.6v2.4h-2.6zM234.0 217.0h1v1h-1zM245.2 266.7h2.6v1h-2.6zM293.1 265.8h2.6v2h-2.6zM279.3 243.1h3.2v2.4h-3.2zM300.1 199.6h1v2h-1zM280.0 206.9h3.2v1.2h-3.2zM299.5 226.7h1v1h-1zM259.5 258.8h1.6v2.4h-1.6zM286.8 262.0h1.2v2h-1.2zM232.7 194.6h2.6v2.4h-2.6zM304.7 197.4h2.6v2.4h-2.6zM233.2 202.5h2v2.4h-2zM285.7 225.4h1v1h-1zM284.4 240.5h3.2v1.2h-3.2zM268.0 226.0h1v1h-1zM281.6 210.0h1.2v1h-1.2zM264.2 193.7h3.2v1h-3.2zM308.9 261.7h1.2v1h-1.2zM240.3 194.4h3.2v2.4h-3.2zM249.4 251.7h1.2v1h-1.2zM259.3 252.8h3.2v1.2h-3.2zM288.4 199.7h3.2v2.4h-3.2zM286.7 229.8h1.6v1h-1.6zM287.4 193.9h1v2.4h-1z" fill="#6e6e6e"/>
<path d="M236.4 217.9h1.2v1h-1.2zM288.4 206.3h1.2v1h-1.2zM298.9 231.9h1.2v1h-1.2zM234.8 222.4h1.2v1h-1.2zM276.0 228.1h1.2v1h-1.2zM284.2 204.6h1.2v1h-1.2zM293.8 222.1h1.2v1h-1.2zM281.6 243.4h1.2v1h-1.2zM263.4 223.9h1.2v1h-1.2zM292.9 268.6h1.2v1h-1.2zM292.8 238.3h1.2v1h-1.2zM253.4 197.9h1.2v1h-1.2zM307.9 249.3h1.2v1h-1.2zM296.2 219.6h1.2v1h-1.2zM278.5 271.2h1.2v1h-1.2zM296.5 241.1h1.2v1h-1.2zM254.7 227.3h1.2v1h-1.2zM301.0 223.1h1.2v1h-1.2zM284.8 241.1h1.2v1h-1.2zM301.7 257.6h1.2v1h-1.2zM252.7 193.1h1.2v1h-1.2zM251.0 226.8h1.2v1h-1.2zM276.9 258.3h1.2v1h-1.2zM301.0 196.4h1.2v1h-1.2zM296.7 257.9h1.2v1h-1.2zM299.4 238.8h1.2v1h-1.2zM251.9 261.1h1.2v1h-1.2zM294.6 247.8h1.2v1h-1.2zM303.1 220.7h1.2v1h-1.2zM236.8 237.3h1.2v1h-1.2zM293.8 209.0h1.2v1h-1.2zM290.0 267.5h1.2v1h-1.2zM248.7 241.6h1.2v1h-1.2zM284.2 230.2h1.2v1h-1.2zM246.5 213.4h1.2v1h-1.2zM290.1 256.3h1.2v1h-1.2zM266.8 200.0h1.2v1h-1.2zM294.5 254.8h1.2v1h-1.2zM248.6 239.4h1.2v1h-1.2zM301.8 263.8h1.2v1h-1.2zM271.7 231.1h1.2v1h-1.2zM277.1 208.1h1.2v1h-1.2zM245.4 207.5h1.2v1h-1.2zM286.1 222.0h1.2v1h-1.2zM275.2 225.2h1.2v1h-1.2zM271.4 204.9h1.2v1h-1.2zM233.6 272.8h1.2v1h-1.2zM259.9 201.5h1.2v1h-1.2zM280.6 256.0h1.2v1h-1.2zM242.5 240.8h1.2v1h-1.2zM257.6 234.6h1.2v1h-1.2zM231.6 195.7h1.2v1h-1.2zM309.2 262.3h1.2v1h-1.2zM268.9 238.4h1.2v1h-1.2zM250.9 255.3h1.2v1h-1.2zM264.1 268.7h1.2v1h-1.2zM291.4 258.5h1.2v1h-1.2zM307.1 213.3h1.2v1h-1.2zM233.0 209.1h1.2v1h-1.2zM244.5 199.7h1.2v1h-1.2z" fill="#e4e4e4"/>
<path d="M254.2 191.5 L258.3 202.4 L262.5 217.4 L265.5 234.1 L266.2 254.2 L265 273.4" fill="none" stroke="#245a24" stroke-width="1.600"/>
<path d="M228.3 233.3 L244.1 234.1 L265.9 234.1" fill="none" stroke="#245a24" stroke-width="1.600"/>
<path d="M265.9 255.5 L277.6 255 L287.6 254.2 L294.3 250.9 L301 244.2 L305.1 235.8 L303.5 224.1 L297.6 212.4 L287.6 202.4 L277.6 198.2 L269.2 199 L260 204.1" fill="none" stroke="#245a24" stroke-width="1.600"/>
<path d="M287.6 254.2 L301 252.9 L311.8 255.9" fill="none" stroke="#245a24" stroke-width="1.600"/>
<path d="M303.5 222.1 L311.8 218.8" fill="none" stroke="#245a24" stroke-width="1.600"/>
<rect x="229" y="191.200" width="83" height="83.600" rx="1.500" fill="none" stroke="#1f561f" stroke-width="2.600"/>
<rect x="229" y="191.200" width="83" height="83.600" rx="1.500" fill="none" stroke="#6ec06e" stroke-width=".7" stroke-dasharray="2 2.500"/>
<path d="M197 210h146M277.600 187v92" stroke="#f01818" stroke-width="1.200"/>
<rect x="198" y="188" width="21.500" height="10.500" fill="#dbe8fa"/>
<rect x="198.500" y="188.500" width="9" height="9.500" fill="#c2d8f5"/>
<path d="M200 190l6 6.500M206 190l-6 6.500" stroke="#2a68c8" stroke-width="1.700"/>
<path d="M214 189.500v7.500M210.200 193.300h7.600M214 189.300l-1.300 1.500h2.600zM214 197.300l-1.300-1.500h2.600zM210 193.300l1.500-1.300v2.600zM218 193.300l-1.500-1.300v2.600z" stroke="#4a82d0" stroke-width=".7" fill="#4a82d0"/>
</svg>
<svg style="left:0;top:0" width="260" height="450">
<path d="M197.400 286.400H222a21.800 21.800 0 0 1 18.300 33.500V408a4 4 0 0 1 -4 4h-12a4 4 0 0 0 -4 4v21.500a4 4 0 0 1 -4 4H197.400z" fill="#b3d1f2" stroke="#6ea2de" stroke-width="1.200"/>
<path d="M199.500 288.500H222" stroke="#d8e8fa" stroke-width="1" fill="none"/>
<circle cx="219.700" cy="309.700" r="20.300" fill="#cbdff6" stroke="#73a5e0" stroke-width="1.100"/>
<circle cx="219.700" cy="309.700" r="8.800" fill="#d9e8fa"/>
<path d="M219.700 294.500l5.500 9.500h-11zM219.700 325l5.500-9.500h-11zM204.300 309.700l9.500-5.500v11zM235.100 309.700l-9.500-5.500v11z" fill="#5f97df"/>
<circle cx="207.9" cy="341.5" r="8.400" fill="#c9def6" stroke="#6a9fde" stroke-width="1.100"/>
<circle cx="227.5" cy="341.5" r="8.400" fill="#c9def6" stroke="#6a9fde" stroke-width="1.100"/>
<circle cx="227.5" cy="366.1" r="8.400" fill="#c9def6" stroke="#6a9fde" stroke-width="1.100"/>
<circle cx="227.5" cy="385.5" r="8.400" fill="#c9def6" stroke="#6a9fde" stroke-width="1.100"/>
<circle cx="227.5" cy="405.2" r="8.400" fill="#c9def6" stroke="#6a9fde" stroke-width="1.100"/>
<circle cx="207.9" cy="429.4" r="8.400" fill="#c9def6" stroke="#6a9fde" stroke-width="1.100"/>
<path d="M203.400 341.500h9M207.900 337v9" stroke="#4f8ad8" stroke-width="1.500"/>
<path d="M203.400 429.400h9" stroke="#4f8ad8" stroke-width="1.500"/>
<circle cx="227.500" cy="341.500" r="4.300" fill="none" stroke="#4f8ad8" stroke-width="1.300"/><path d="M227.500 336v3.500M227.500 343.500v3.500M222 341.500h3.500M229.500 341.500h3.500" stroke="#4f8ad8" stroke-width="1.300"/>
<path d="M223 366.100l7.500-4-2 4 2 4z" fill="#4f8ad8"/>
<circle cx="227.500" cy="385.500" r="3.600" fill="#4f8ad8"/>
<path d="M232 405.200l-7.500-4 2 4-2 4z" fill="#4f8ad8"/>
<path d="M204.200 357a3.700 3.700 0 0 1 7.400 0v57.500a3.700 3.700 0 0 1 -7.400 0z" fill="#cfe1f7" stroke="#6a9fde" stroke-width="1"/>
<path d="M206 371h3.800M206 377h3.800M206 383h3.800M206 389h3.800M206 395h3.800M206 401h3.800M206 407h3.800M206 413h3.800" stroke="#6a9fde" stroke-width=".9"/>
<rect x="201.800" y="360.500" width="12" height="5.200" rx="1" fill="#e8f1fc" stroke="#5d95dc" stroke-width="1"/><path d="M204 363.100h7.600" stroke="#5d95dc" stroke-width="1"/>
<rect x="198" y="287" width="6.500" height="6.500" rx="1.500" fill="#c6dbf5" stroke="#6a9fde" stroke-width=".7"/><path d="M199.500 288.500l3.500 3.500M203 288.500l-3.500 3.500" stroke="#3f7ad0" stroke-width="1"/>
</svg>
<!-- dialog -->
<div class="abs" style="left:781px;top:186px;width:239px;height:370px;background:#fff;border:1px solid #a8a8a8;box-shadow:1px 1px 0 #d0d0d0"></div>
<div class="abs" style="left:784px;top:190px;width:233px;height:23px;background:linear-gradient(#f0f6fe 0,#d6e5f8 50%,#c3d7f1 100%);border:1px solid #8fb1e2"></div>
<div class="abs" style="left:784px;top:215px;width:233px;height:338px;background:#fff;border:1px solid #b9bcc9"></div>
<div class="t" style="left:790px;top:196px;font-weight:bold">Zeichnen / Messen</div>
<svg style="left:930px;top:193px" width="82" height="18" fill="none" stroke="#4a82d6" stroke-width="1.200">
 <path d="M3 12.500h7" stroke-width="1.600"/>
 <path d="M25.500 8.500h5.500v5h-5.500zM27.500 8.500V6h5.500v5h-2"/>
 <path d="M47.500 6l7 7M54.500 6l-7 7" stroke-width="1.400"/>
 <path d="M71 4.500h4M71.500 4.500v5h3v-5M70 10h6M73 10v3.500"/>
</svg>
<div class="t" style="left:788.500px;top:219px">Zeichne</div>
<div class="sel" style="left:788px;top:231px;width:162px;height:15px;border:1px solid #c6c8d4;border-top-color:#9a9db0;padding-left:3px;line-height:13px">Kreis</div>
<div class="arr" style="left:936px;top:236px"></div>
<div class="abs" style="left:968px;top:226px;width:24px;height:21px;background:linear-gradient(#dce9fb,#c4daf7);border:1px solid #a6c5ef"></div>
<svg style="left:971px;top:228px" width="18" height="17"><path d="M2 6.500l6-5v3c5 0 7.500 3 7 9.500-1.200-3.500-3-5-7-5v3z" fill="#f6b0b0" stroke="#e02828" stroke-width="1.300" stroke-linejoin="round"/></svg>
<div class="abs cb" style="left:789px;top:257px"></div>
<div class="t" style="left:805px;top:257px">Messen verwenden</div>
<svg style="left:894px;top:257px" width="10" height="11"><rect x=".5" y=".5" width="8.500" height="10" rx="1" fill="#dfe9f8" stroke="#5a7fb5"/><rect x="2" y="2" width="5.500" height="2.500" fill="#fff" stroke="#5a7fb5" stroke-width=".6"/><path d="M2 6.200h5.500M2 8.200h5.500" stroke="#3c5f95" stroke-width="1" stroke-dasharray="1.200 .9"/></svg>
<div class="t" style="left:906px;top:257px">[m][m²]</div>
<div class="abs" style="left:788px;top:273px;width:220px;height:33px;background:#cfe2fb"></div>
<div class="t" style="left:792px;top:277.500px;line-height:11px;text-shadow:0 0 .4px #000">Radius: 5,65 m<br>Fläche: 100,12 m²</div>
<svg style="left:994px;top:276px" width="10" height="11"><rect x=".8" y="1.800" width="8" height="8.500" fill="#f4f6fb" stroke="#4a5a78" stroke-width=".9"/><rect x="2.800" y=".5" width="4" height="2.300" fill="#c8d2e6" stroke="#4a5a78" stroke-width=".7"/></svg>
<div class="t" style="left:788.500px;top:309px">Kreisradius</div>
<div class="sel" style="left:788px;top:320px;width:54px;height:16px;border:1px solid #c6c8d4;border-top-color:#9a9db0;padding-left:3px;line-height:15px">0,00</div>
<div class="abs btn" style="left:862px;top:315px;width:58px;height:21px"></div>
<div class="abs ico" style="left:866px;top:319px"></div>
<div class="t" style="left:883px;top:321px;text-shadow:0 0 .4px #000">Setzen</div>
<div class="abs" style="left:788px;top:345px;width:225px;height:1px;background:#a9c9f0"></div>
<div class="t" style="left:788.500px;top:354.500px">Linienstärke</div>
<div class="t" style="left:901px;top:354.500px">Linienfarbe</div>
<div class="sel" style="left:788px;top:365px;width:27px;height:16px;border:1px solid #c6c8d4;border-top-color:#9a9db0;padding-left:3px;line-height:15px">1</div>
<div class="abs trk" style="left:819px;top:369px"></div>
<div class="abs thm" style="left:827px;top:366px"></div>
<div class="abs sw" style="left:901px;top:366px;background:#fe0000"></div>
<div class="abs rb" style="left:930px;top:367px"></div>
<div class="t" style="left:788.500px;top:386px">Sichtbarkeit</div>
<div class="t" style="left:901px;top:386px">Füllfarbe</div>
<div class="sel" style="left:788px;top:397px;width:27px;height:16px;border:1px solid #c6c8d4;border-top-color:#9a9db0;padding-left:3px;line-height:14px">0.5</div>
<div class="abs trk" style="left:819px;top:401px"></div>
<div class="abs thm" style="left:843px;top:398px"></div>
<div class="abs sw" style="left:901px;top:397px;background:#333"></div>
<div class="abs rb" style="left:930px;top:398px"></div>
<div class="t" style="left:901px;top:417px">Hintergrundfarbe</div>
<div class="abs cb" style="left:789px;top:430px"></div>
<div class="t" style="left:805px;top:428px">Meßtext Box</div>
<div class="abs sw" style="left:901px;top:429px;background:#5ea8f6"></div>
<div class="abs rb" style="left:930px;top:430px"></div>
<div class="abs" style="left:788px;top:453px;width:225px;height:1px;background:#a9c9f0"></div>
<div class="abs btn" style="left:788px;top:463px;width:100px;height:22px"></div>
<div class="abs ico" style="left:792px;top:468px"></div>
<div class="t" style="left:809.500px;top:468px">Weiteres Objekt</div>
<div class="abs btn" style="left:901px;top:463px;width:81px;height:22px"></div>
<div class="abs ico" style="left:905px;top:468px"></div>
<div class="t" style="left:922px;top:468px">Verschicken</div>
<div class="abs" style="left:788px;top:498px;width:218px;height:1px;background:#a9c9f0"></div>
<div class="t" style="left:788.500px;top:504px;font-weight:bold">Vorhandene Objekte</div>
<div class="abs tgl" style="left:992px;top:504px"></div><svg style="left:992px;top:504px" width="14" height="12"><path d="M4.500 2.500l2.500 2.500 2.500-2.500M4.500 6l2.500 2.500 2.500-2.500" fill="none" stroke="#111" stroke-width="1.300"/></svg>
<div class="abs" style="left:788px;top:525px;width:218px;height:1px;background:#a9c9f0"></div>
<div class="t" style="left:788.500px;top:532px;font-weight:bold">Punktfang</div>
<div class="abs tgl" style="left:992px;top:530px"></div><svg style="left:992px;top:530px" width="14" height="12"><path d="M4.500 2.500l2.500 2.500 2.500-2.500M4.500 6l2.500 2.500 2.500-2.500" fill="none" stroke="#111" stroke-width="1.300"/></svg>
<svg style="left:1010px;top:546px" width="9" height="9"><path d="M8 1L1 8M8 4L4 8M8 7L7 8" stroke="#9a9a9a" stroke-width="1"/></svg>

<div class="abs" style="left:7px;top:735px;width:1018px;height:23px;background:linear-gradient(#e1ecfb 0,#c9dcf7 45%,#b4cef3 100%);border-top:1px solid #b5cdee"></div>
<div class="abs" style="left:10px;top:737px;width:110px;height:19px;background:linear-gradient(#ffd08a,#ffbd5a);border:1px solid #ffc978"></div>
<svg style="left:13px;top:740px" width="14" height="12"><rect x=".600" y=".600" width="12.800" height="10.800" fill="#f2f2f2" stroke="#333" stroke-width="1.200"/><rect x="1.200" y="1.200" width="11.600" height="2" fill="#2a5fc0"/></svg>
<div class="t" style="left:30px;top:741px;font-weight:bold;font-size:9px;color:#222">Zeichnen / Messen</div>
<svg style="left:710px;top:742px" width="8" height="8"><circle cx="4" cy="4" r="3" fill="#8fe070" stroke="#38b838" stroke-width="1.400"/></svg>
<div class="t" style="left:797px;top:741px;color:#5b9cf2">Einstellungen</div>
<div class="sarr" style="left:863px;top:745px;border-top-color:#5b9cf2"></div>
<div class="t" style="left:882px;top:741px;color:#5b9cf2">Kartenausschnitte</div>
<div class="sarr" style="left:970px;top:745px;border-top-color:#5b9cf2"></div>
<svg style="left:1004px;top:738px" width="17" height="17" fill="none" stroke="#2f6ed8" stroke-width="1.200"><path d="M2 15l2-4 8-8.500 2 2-8 8.500zM4 11l2 2M10 4.500l2.500-2.500 2.500 2.500-7 7.500"/></svg>
<div class="abs" style="left:0;top:758px;width:1033px;height:2px;background:#ebebeb"></div>

</div></body></html>
